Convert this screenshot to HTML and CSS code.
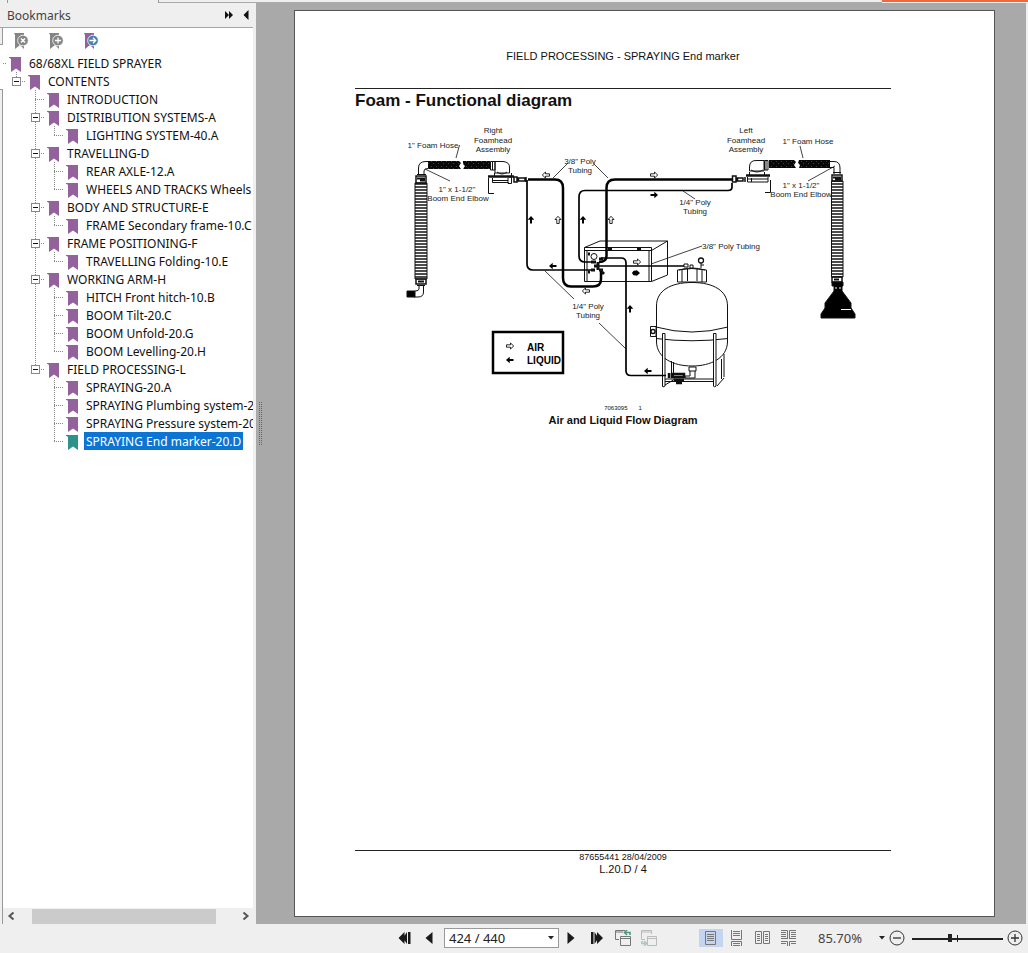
FILE: index.html
```html
<!DOCTYPE html>
<html lang="en">
<head>
<meta charset="utf-8">
<title>68/68XL Field Sprayer - PDF viewer</title>
<link rel="stylesheet" href="styles.css">
</head>
<body>
<svg class="defs" aria-hidden="true">
  <symbol id="flag" viewBox="0 0 12 15"><path d="M0 0H12V15L7 11.500L2 15V2Q1 1 0 0.800Z" fill="currentColor"/></symbol>
  <symbol id="air" viewBox="-5 -4 10 8"><path d="M-3.500-1.200H.5V-3L3.700 0L.5 3V1.200H-3.500Z" fill="#fff" stroke="#111" stroke-width=".9"/></symbol>
  <symbol id="liq" viewBox="-5 -4 10 8"><path d="M-3.500-1H.3V-3.300L4 0L.3 3.300V1H-3.500Z" fill="#000"/></symbol>
</svg>
<div class="app">
  <div class="tabs"><span class="tab tab-a"></span><span class="tab tab-b"></span><span class="tab tab-c"></span><span class="accent"></span></div>
  <div class="work">
    <aside class="side">
      <header class="side-head">
        <h2>Bookmarks</h2>
        <button class="plain" aria-label="Expand panel"><svg width="10" height="10"><path d="M1 1L5 5L1 9ZM5 1L9 5L5 9Z" fill="#111"/></svg></button>
        <button class="plain" aria-label="Collapse panel"><svg width="6" height="10"><path d="M5.500 0V10L.5 5Z" fill="#111"/></svg></button>
      </header>
      <div class="side-body">
        <div class="rail"><span class="rail-top"></span><span class="rail-open"></span><span class="rail-rest"></span></div>
        <div class="panel">
          <div class="tools">
            <button class="plain" aria-label="Delete bookmark"><svg width="16" height="17"><path d="M0 0H10V16L6 12L1 16V2Z" fill="#858585"/><circle cx="9" cy="7.500" r="5.300" fill="#858585" stroke="#fff" stroke-width=".8"/><path d="M7 5.500L11 9.500M11 5.500L7 9.500" stroke="#fff" stroke-width="1.500"/></svg></button>
            <button class="plain" aria-label="Add bookmark"><svg width="16" height="17"><path d="M0 0H10V16L6 12L1 16V2Z" fill="#858585"/><circle cx="9" cy="7.500" r="5.300" fill="#858585" stroke="#fff" stroke-width=".8"/><path d="M6 7.500H12M9 4.500V10.500" stroke="#fff" stroke-width="1.300"/></svg></button>
            <button class="plain" aria-label="Go to bookmark"><svg width="16" height="17"><path d="M0 0H10V16L6 12L1 16V2Z" fill="#93619b"/><circle cx="9" cy="7.500" r="5.300" fill="#4580ac" stroke="#fff" stroke-width=".8"/><path d="M5.500 7.500H11.500M9 4.800L11.700 7.500L9 10.200" fill="none" stroke="#fff" stroke-width="1.300"/></svg></button>
          </div>
          <ul class="tree root">
            <li><span class="branch"></span><div><a href="#" class="row"><svg class="flag"><use href="#flag"/></svg><span>68/68XL FIELD SPRAYER</span></a>
              <ul class="tree">
                <li><span class="branch"><button class="toggle" aria-label="Collapse"></button></span><div><a href="#" class="row"><svg class="flag"><use href="#flag"/></svg><span>CONTENTS</span></a>
                  <ul class="tree">
                    <li><span class="branch"></span><div><a href="#" class="row"><svg class="flag"><use href="#flag"/></svg><span>INTRODUCTION</span></a></div></li>
                    <li><span class="branch"><button class="toggle" aria-label="Collapse"></button></span><div><a href="#" class="row"><svg class="flag"><use href="#flag"/></svg><span>DISTRIBUTION SYSTEMS-A</span></a>
                      <ul class="tree">
                        <li><span class="branch"></span><div><a href="#" class="row"><svg class="flag"><use href="#flag"/></svg><span>LIGHTING SYSTEM-40.A</span></a></div></li>
                      </ul></div></li>
                    <li><span class="branch"><button class="toggle" aria-label="Collapse"></button></span><div><a href="#" class="row"><svg class="flag"><use href="#flag"/></svg><span>TRAVELLING-D</span></a>
                      <ul class="tree">
                        <li><span class="branch"></span><div><a href="#" class="row"><svg class="flag"><use href="#flag"/></svg><span>REAR AXLE-12.A</span></a></div></li>
                        <li><span class="branch"></span><div><a href="#" class="row"><svg class="flag"><use href="#flag"/></svg><span>WHEELS AND TRACKS Wheels</span></a></div></li>
                      </ul></div></li>
                    <li><span class="branch"><button class="toggle" aria-label="Collapse"></button></span><div><a href="#" class="row"><svg class="flag"><use href="#flag"/></svg><span>BODY AND STRUCTURE-E</span></a>
                      <ul class="tree">
                        <li><span class="branch"></span><div><a href="#" class="row"><svg class="flag"><use href="#flag"/></svg><span>FRAME Secondary frame-10.C</span></a></div></li>
                      </ul></div></li>
                    <li><span class="branch"><button class="toggle" aria-label="Collapse"></button></span><div><a href="#" class="row"><svg class="flag"><use href="#flag"/></svg><span>FRAME POSITIONING-F</span></a>
                      <ul class="tree">
                        <li><span class="branch"></span><div><a href="#" class="row"><svg class="flag"><use href="#flag"/></svg><span>TRAVELLING Folding-10.E</span></a></div></li>
                      </ul></div></li>
                    <li><span class="branch"><button class="toggle" aria-label="Collapse"></button></span><div><a href="#" class="row"><svg class="flag"><use href="#flag"/></svg><span>WORKING ARM-H</span></a>
                      <ul class="tree">
                        <li><span class="branch"></span><div><a href="#" class="row"><svg class="flag"><use href="#flag"/></svg><span>HITCH Front hitch-10.B</span></a></div></li>
                        <li><span class="branch"></span><div><a href="#" class="row"><svg class="flag"><use href="#flag"/></svg><span>BOOM Tilt-20.C</span></a></div></li>
                        <li><span class="branch"></span><div><a href="#" class="row"><svg class="flag"><use href="#flag"/></svg><span>BOOM Unfold-20.G</span></a></div></li>
                        <li><span class="branch"></span><div><a href="#" class="row"><svg class="flag"><use href="#flag"/></svg><span>BOOM Levelling-20.H</span></a></div></li>
                      </ul></div></li>
                    <li><span class="branch"><button class="toggle" aria-label="Collapse"></button></span><div><a href="#" class="row"><svg class="flag"><use href="#flag"/></svg><span>FIELD PROCESSING-L</span></a>
                      <ul class="tree">
                        <li><span class="branch"></span><div><a href="#" class="row"><svg class="flag"><use href="#flag"/></svg><span>SPRAYING-20.A</span></a></div></li>
                        <li><span class="branch"></span><div><a href="#" class="row"><svg class="flag"><use href="#flag"/></svg><span>SPRAYING Plumbing system-20</span></a></div></li>
                        <li><span class="branch"></span><div><a href="#" class="row"><svg class="flag"><use href="#flag"/></svg><span>SPRAYING Pressure system-20</span></a></div></li>
                        <li><span class="branch"></span><div><a href="#" class="row current"><svg class="flag"><use href="#flag"/></svg><span>SPRAYING End marker-20.D</span></a></div></li>
                      </ul></div></li>
                  </ul></div></li>
              </ul></div></li>
          </ul>
          <div class="hscroll">
            <button class="plain" aria-label="Scroll left"><svg width="8" height="8"><path d="M6.500 .5L2.500 4L6.500 7.500" fill="none" stroke="#555" stroke-width="2"/></svg></button>
            <span class="bar"></span>
            <button class="plain" aria-label="Scroll right"><svg width="8" height="8"><path d="M1.500 .5L5.500 4L1.500 7.500" fill="none" stroke="#555" stroke-width="2"/></svg></button>
          </div>
        </div>
      </div>
    </aside>
    <main class="viewer">
      <span class="grip"></span>
      <article class="page">
        <p class="running">FIELD PROCESSING - SPRAYING End marker</p>
        <h1>Foam - Functional diagram</h1>
        <figure>
          <svg class="diagram" viewBox="355 120 536 282" role="img" aria-label="Air and liquid flow diagram">
            <defs>
              <pattern id="ribs" width="12" height="3" patternUnits="userSpaceOnUse"><path d="M0 1H12" stroke="#111" stroke-width="1.500"/></pattern>
              <pattern id="braid" width="5" height="5" patternUnits="userSpaceOnUse"><path d="M0 0H5V5H0Z" fill="#080808"/><path d="M1 1L2 2M3 4L4 3" stroke="#777" stroke-width=".5"/></pattern>
            </defs>
            <g fill="none" stroke="#111" stroke-width="1">
              <!-- right foamhead -->
              <path d="M418.500 175V168Q418.500 161.500 426 161.500H428M424 175V171Q424 168.500 428 168.500M417 174.500H426"/>
              <path d="M428 161H459L461 163L459 166L461 169H428ZM463 161H490V169H463L465 166L463 164Z" fill="url(#braid)" stroke="none"/>
              <path d="M490.500 161.500H495V170H490.500ZM492.500 161V170M495 161.500H503Q510 162 509.500 168V173H495ZM497 172Q502 176 507 172M494.500 173V176M511.500 173V176"/>
              <path d="M488 176.500H514" stroke-width="2.500"/>
              <path d="M492.500 178V182.500H508.500M508.500 177H511.500V183.500H508V178M488.500 178V193.500H494M492 180.500H508"/>
              <path d="M514 177V182H517V177ZM518.500 178H525V181H518.500ZM526 177V182" stroke-width="1.500"/>
              <path d="M415 183H427V279H415Z" fill="url(#ribs)"/>
              <path d="M416 176H426V183H416ZM416 279H426V284H416Z" stroke-width="1.500"/><path d="M417 178.500H425M420 180.500H425M418 281.500H424" stroke-width="2"/>
              <path d="M417 285.500H425M419 286V289Q419 291 415 291M423.500 286V292Q423.500 297 418 297H414"/>
              <path d="M407 291H415V297H407Z" fill="#000"/>
              <!-- left foamhead -->
              <path d="M749.500 171V167Q749.500 160 757 160.500H764V171H749.500ZM751 170Q757 174 763 170M764.500 160.500H768V170H764.500ZM766 160V170M749.500 172V175M764.500 172V175"/>
              <path d="M746 175.500H770" stroke-width="2.500"/>
              <path d="M747.500 177V182H768V177M751.500 178V182M747 179H768M770.500 180V192.500H765"/>
              <path d="M732.500 176V182H736V176ZM737.500 178H743V181H737.500ZM745 177V182" stroke-width="1.500"/>
              <path d="M769 160H794L796 162L794 165L796 168H769ZM799 160H830V168H799L800 165L798 163Z" fill="url(#braid)" stroke="none"/>
              <path d="M830 161.500H834Q840 161.500 840 168V174M830 167.500H834V174M833 172.500H841"/>
              <path d="M831.500 181H843V277H831.500Z" fill="url(#ribs)"/>
              <path d="M832 175H842V181H832ZM832 277H842V282H832Z" stroke-width="1.500"/><path d="M833 177.500H841M835 179.500H841M834 279.500H839" stroke-width="2"/>
              <path d="M832 282H843V286H842V291L851 303V308L855 314V318H821V314L825 308V303L834 291V286H832Z" fill="#000"/>
              <path d="M835 288H837M839 288H841M841 309.500H851" stroke="#fff" stroke-width="1.200"/>
              <!-- control box -->
              <path d="M584.500 281.500V247.500L600 241H667.500V275L651.500 281.500ZM584.500 247.500H651.500V281.500M584.500 250.500H651.500L667.500 241M587 251V281M649 251V281"/>
              <path d="M608 249H612M637 249H641" stroke-width="3"/>
              <!-- tank -->
              <path d="M656.500 342V306C656.500 291 670 282.500 692 282.500S727.500 291 727.500 306V342C727 358 711 366 692 366S657 358 656.500 342ZM656 327Q692 337 728 327M656 338.500Q692 343 728 338.500"/>
              <path d="M677.500 282V270Q692 267 706.500 270V282ZM682 270V282M687.500 269V281M697 269V281M702 270V282" />
              <path d="M679 270Q692 266 705 270M690 269V265H693V269M684 264H688V267H684ZM701 268V263M701 265H704"/><circle cx="701" cy="260.500" r="2.500" stroke-width="1.300"/>
              <path d="M650.500 326.500H656V336.500H650.500Z"/><circle cx="653" cy="331.500" r="2" stroke-width="1.400"/>
              <path d="M671.500 361V376M673.500 362V376M721.500 359V379M724 354V377M665 379H713M665 381.500H713M665 385L675 379M717 386L724 378"/>
              <path d="M662.500 333.500H665V386L663 387L662.500 386ZM713.500 333.500H716V386L714.500 387L713.500 386Z" fill="#fff"/>
              <path d="M689 367H696V371H689ZM690 371V376H685V378H695V371"/>
              <path d="M669 373V378M672 374H684V377H672ZM674 380H684M676 383H682" stroke-width="2.500"/>
              <!-- tubing -->
              <g stroke="#000" stroke-width="2.500"><path d="M528 179.500H555Q563 179.500 563 188V278Q563 286.500 571 286.500H593Q601 286.500 601 279V270M732 179.500H615Q606.500 179.500 606.500 188V256Q606.500 262 599 262"/></g>
              <g stroke="#000" stroke-width="1.700"><path d="M527 180V264Q527 270 533 270H592M732 183V187Q732 190.500 728 190.500H585Q579 190.500 579 197V256Q579 262 585 262H592M601 258H621Q626 258 626 263V371Q626 375.500 631 375.500H666M597 266H684"/></g>
              <circle cx="594" cy="256.500" r="3"/>
              <path d="M588 254H590M588 272H590M591 262H596M591 270H595M599 259H603M599 270H603M604 274L602 272" stroke-width="3"/><path d="M594 266H599M598 262V270" stroke-width="3"/>
              <!-- leaders -->
              <path d="M459.500 145L456 158M425 169L450 181M568 163L553 178M594 164L608 178M683 191L695 199M651 264L702 246M545 271L574 299M599 323L626 349M800 146L803 158M808 181L835 166" stroke-width=".8"/>
              <path d="M493 332H563V373H493Z" stroke="#000" stroke-width="2.500"/>
            </g>
            <use href="#air" x="-5" y="-4" width="10" height="8" transform="translate(546 175) rotate(180)"/>
            <use href="#air" x="-5" y="-4" width="10" height="8" transform="translate(558 220) rotate(-90)"/>
            <use href="#air" x="-5" y="-4" width="10" height="8" transform="translate(611 220) rotate(-90)"/>
            <use href="#air" x="-5" y="-4" width="10" height="8" transform="translate(654 175)"/>
            <use href="#air" x="-5" y="-4" width="10" height="8" transform="translate(637 262)"/>
            <use href="#air" x="-5" y="-4" width="10" height="8" transform="translate(586 291) rotate(180)"/>
            <use href="#air" x="-5" y="-4" width="10" height="8" transform="translate(510 346)"/>
            <use href="#liq" x="-5" y="-4" width="10" height="8" transform="translate(531 220) rotate(-90)"/>
            <use href="#liq" x="-5" y="-4" width="10" height="8" transform="translate(583 220) rotate(-90)"/>
            <use href="#liq" x="-5" y="-4" width="10" height="8" transform="translate(630 309) rotate(-90)"/>
            <use href="#liq" x="-5" y="-4" width="10" height="8" transform="translate(654 195)"/>
            <use href="#liq" x="-5" y="-4" width="10" height="8" transform="translate(553 266) rotate(180)"/>
            <use href="#liq" x="-5" y="-4" width="10" height="8" transform="translate(648 371) rotate(180)"/>
            <use href="#liq" x="-5" y="-4" width="10" height="8" transform="translate(510 360) rotate(180)"/>
            <use href="#liq" x="-5" y="-4" width="10" height="8" transform="translate(636 273)"/><circle cx="635" cy="273" r="2.500"/>
            <g class="callout">
              <text x="433" y="148">1" Foam Hose</text>
              <text x="493" y="133">Right</text><text x="493" y="143">Foamhead</text><text x="493" y="152">Assembly</text>
              <text x="457" y="192">1" x 1-1/2"</text><text x="458" y="201">Boom End Elbow</text>
              <text x="580" y="164">3/8" Poly</text><text x="580" y="173">Tubing</text>
              <text x="746" y="133">Left</text><text x="746" y="143">Foamhead</text><text x="746" y="152">Assembly</text>
              <text x="808" y="144">1" Foam Hose</text>
              <text x="801" y="188">1" x 1-1/2"</text><text x="801" y="197">Boom End Elbow</text>
              <text x="695" y="205">1/4" Poly</text><text x="695" y="214">Tubing</text>
              <text x="731" y="249">3/8" Poly Tubing</text>
              <text x="588" y="309">1/4" Poly</text><text x="588" y="318">Tubing</text>
            </g>
            <g class="key"><text x="527" y="351">AIR</text><text x="527" y="364">LIQUID</text></g>
          </svg>
          <div class="fignum"><span>7063095</span><span>1</span></div>
          <figcaption>Air and Liquid Flow Diagram</figcaption>
        </figure>
        <footer class="page-foot"><small>87655441 28/04/2009</small><span>L.20.D / 4</span></footer>
      </article>
    </main>
    <div class="edge"></div>
  </div>
  <footer class="status">
    <div class="group">
      <button class="btn" aria-label="First page"><svg width="14" height="12"><path d="M6.500 0V12L.5 6ZM12.500 0V12H10V0ZM9 0V12L5 6Z" fill="#1a1a1a"/></svg></button>
      <button class="btn" aria-label="Previous page"><svg width="8" height="12"><path d="M7.500 0V12L.5 6Z" fill="#1a1a1a"/></svg></button>
    </div>
    <div class="group field">
      <span class="combo"><select aria-label="Page"><option>424 / 440</option></select><svg width="6" height="4"><path d="M0 0H6L3 3.500Z" fill="#222"/></svg></span>
      <button class="btn" aria-label="Next page"><svg width="8" height="12"><path d="M.5 0V12L7.500 6Z" fill="#1a1a1a"/></svg></button>
    </div>
    <div class="group spaced">
      <button class="btn" aria-label="Last page"><svg width="14" height="12"><path d="M1 0H3.500V12H1ZM4.500 0L8.500 6L4.500 12ZM7 0L13 6L7 12Z" fill="#1a1a1a"/></svg></button>
      <button class="btn" aria-label="Previous view"><svg width="16" height="16" fill="none" stroke="#777"><path d="M4 9.500H.5V.5H10M.5 2H8"/><path d="M5.500 6.500H15.500V15.500H5.500ZM5.500 8.500H15"/><path d="M15 5V2.500H10M12 0L9.500 2.500L12 5" stroke="#4b9a7c" stroke-width="1.600"/></svg></button>
      <button class="btn" aria-label="Next view"><svg width="16" height="16" fill="none" stroke="#bbb"><path d="M4 9.500H.5V.5H10.500V4M.5 2H10"/><path d="M6.500 6.500H15.500V15.500H6.500ZM6.500 8.500H15"/><path d="M1 11V13.500H5M3 11L5.500 13.500L3 16" stroke="#a9c8bb" stroke-width="1.600"/></svg></button>
    </div>
    <div class="group spaced views">
      <button class="btn on" aria-label="Single page"><svg width="12" height="14" fill="none" stroke="#777"><path d="M.5 .5H10.500V13.500H.5ZM2 3.500H9M2 5.500H9M2 7.500H9M2 9.500H9"/></svg></button>
      <button class="btn" aria-label="Continuous"><svg width="12" height="16" fill="none" stroke="#777"><path d="M.5 0V9.500H10.500V0M2 1.500H9M2 3.500H9M2 5.500H9M.5 16V11.500H10.500V16M2 13.500H9M2 15.500H9"/></svg></button>
      <button class="btn" aria-label="Facing"><svg width="16" height="14" fill="none" stroke="#777"><path d="M.5 .5H6.500V12.500H.5ZM8.500 .5H14.500V12.500H8.500ZM2 3.500H5M2 5.500H5M2 7.500H5M2 9.500H5M10 3.500H13M10 5.500H13M10 7.500H13M10 9.500H13"/></svg></button>
      <button class="btn" aria-label="Continuous facing"><svg width="16" height="16" fill="none" stroke="#777"><path d="M0 .5H6.500V9M15 .5H8.500V9M0 2.500H5M0 4.500H5M0 6.500H5M10 2.500H15M10 4.500H15M10 6.500H15M0 8.500H6.500M8.500 8.500H15M0 11.500H6.500V16M15 11.500H8.500V16M0 13.500H5M10 13.500H15"/></svg></button>
    </div>
    <div class="zoom">
      <span class="combo bare"><select aria-label="Zoom level"><option>85.70%</option></select><svg width="6" height="4"><path d="M0 0H6L3 3.500Z" fill="#222"/></svg></span>
      <button class="plain" aria-label="Zoom out"><svg width="16" height="16" fill="none" stroke="#333"><circle cx="8" cy="8" r="7"/><path d="M4 8H12" stroke-width="1.300"/></svg></button>
      <input type="range" min="0" max="100" value="41" aria-label="Zoom">
      <button class="plain" aria-label="Zoom in"><svg width="16" height="16" fill="none" stroke="#333"><circle cx="8" cy="8" r="7"/><path d="M4 8H12M8 4V12" stroke-width="1.300"/></svg></button>
    </div>
  </footer>
</div>
</body>
</html>
```
FILE: styles.css
```css
* { box-sizing: border-box; }
body { margin: 0; background: #efefef; font-family: "Noto Sans", Tahoma, sans-serif; font-size: 12px; color: #111; }
button { font: inherit; border: 0; background: none; padding: 0; }
svg { display: block; flex: none; }
ul { list-style: none; margin: 0; padding: 0; }
h1, h2, p, figure { margin: 0; }
.defs { position: absolute; width: 0; height: 0; }
.plain { display: flex; }

.app { display: flex; flex-direction: column; min-height: 100vh; }
.tabs { display: flex; height: 3px; }
.tab { border-right: 1px solid #999; }
.tab-a { width: 8px; }
.tab-b { width: 151px; }
.tab-c { flex: 1; border-right: 0; border-bottom: 1px solid #aaa; }
.accent { width: 146px; height: 2px; background: #f26637; }

.work { flex: 1; display: flex; }
.side { width: 256px; flex: none; display: flex; flex-direction: column; padding-right: 3px; }
.side-head { display: flex; align-items: center; height: 25px; padding: 0 4px 0 7px; gap: 9px; border-bottom: 1px solid #a5a5a5; }
.side-head h2 { flex: 1; font-size: 12px; font-weight: 400; color: #444; }
.side-body { flex: 1; display: flex; }
.rail { width: 3px; flex: none; display: flex; flex-direction: column; }
.rail-top { height: 17px; border-right: 1px solid #999; border-bottom: 1px solid #999; }
.rail-open { height: 45px; background: #fff; border-bottom: 1px solid #999; }
.rail-rest { flex: 1; border-right: 1px solid #999; }
.panel { flex: 1; min-width: 0; display: flex; flex-direction: column; background: #fff; }
.tools { display: flex; gap: 19px; padding: 5px 11px 4px; }

.tree { white-space: nowrap; }
.root { flex: 1; overflow: hidden; }
.tree li { display: grid; grid-template-columns: 19px minmax(0, 1fr); }
.root > li { grid-template-columns: 4px minmax(0, 1fr); }
.branch {
  display: block; padding: 5px 0 0 5px;
  background:
    repeating-linear-gradient(90deg, #888 0 1px, #fff 1px 2px) 9px 9px / 12px 1px no-repeat,
    repeating-linear-gradient(#888 0 1px, #fff 1px 2px) 9px 0 / 1px 100% no-repeat;
}
.tree li:last-child > .branch {
  background:
    repeating-linear-gradient(90deg, #888 0 1px, #fff 1px 2px) 9px 9px / 12px 1px no-repeat,
    repeating-linear-gradient(#888 0 1px, #fff 1px 2px) 9px 0 / 1px 10px no-repeat;
}
.root > li:last-child > .branch { background: repeating-linear-gradient(90deg, #888 0 1px, #fff 1px 2px) 0 9px / 4px 1px no-repeat; padding: 0; }
.toggle { display: block; width: 9px; height: 9px; border: 1px solid #888; background: linear-gradient(#111, #111) center / 5px 1px no-repeat #fff; }
.row { display: flex; height: 18px; padding-left: 2px; gap: 6px; color: #111; text-decoration: none; line-height: 16px; }
.row span { padding: 2px 2px 0; }
.flag { width: 12px; height: 15px; margin-top: 3px; color: #93619b; }
.current .flag { color: #2b9389; }
.current span { background: #0c75d3; color: #fff; }

.hscroll { display: flex; align-items: center; height: 16px; padding: 0 3px 0 4px; background: #efefef; }
.bar { flex: 1; height: 15px; margin: 0 26px 0 17px; background: #cbcbcb; }

.viewer { flex: 1; min-width: 0; display: flex; background: #a9a9a9; padding: 7px 31px 7px 3px; }
.grip { width: 3px; height: 44px; margin: 392px 32px 0 0; flex: none; background: repeating-linear-gradient(#666 0 1px, transparent 1px 2px) 0 0 / 1px 100% no-repeat, repeating-linear-gradient(#666 0 1px, transparent 1px 2px) 2px 0 / 1px 100% no-repeat; }
.edge { width: 2px; background: #efefef; }
.page { flex: 1; min-width: 0; display: flex; flex-direction: column; background: #fff; border: 1px solid #555; padding: 37px 103px 41px 60px; font-family: "Liberation Sans", Arial, sans-serif; }
.running { text-align: center; font-size: 11px; line-height: 16px; padding-bottom: 24px; border-bottom: 1px solid #222; }
.page h1 { font-size: 17px; line-height: 24px; }
.page figure { flex: 1; padding-top: 7px; text-align: center; }
.diagram { width: 100%; }
.callout { font-size: 8px; text-anchor: middle; fill: #222; }
.key { font-size: 10px; font-weight: 700; }
.fignum { display: flex; justify-content: center; gap: 11px; font-size: 6px; line-height: 12px; }
.page figcaption { font-size: 11px; font-weight: 700; line-height: 12px; }
.page-foot { display: flex; flex-direction: column; align-items: center; border-top: 1px solid #222; font-size: 11px; line-height: 12px; }
.page-foot small { font-size: 9px; }

.status { display: flex; justify-content: flex-end; align-items: center; height: 29px; padding: 0 5px 2px 0; }
.group { display: flex; align-items: center; }
.btn { display: flex; align-items: center; justify-content: center; width: 24px; height: 18px; }
.on { background: #c5d5f0; }
.field { margin-left: 3px; }
.spaced { gap: 2px; margin-left: 2px; }
.views { margin-left: 38px; }
.combo { display: grid; align-items: center; width: 115px; height: 20px; background: #fff; border: 1px solid #999; }
.combo > * { grid-area: 1 / 1; }
.combo svg { justify-self: end; margin-right: 4px; pointer-events: none; }
.combo select { appearance: none; width: 100%; height: 18px; border: 0; padding: 0 4px; background: none; font: 13px/18px "Noto Sans", sans-serif; color: #222; }
.zoom { display: flex; align-items: center; margin-left: 17px; }
.combo.bare { width: 71px; background: none; border: 0; }
.bare select { padding: 0; color: #444; }
.zoom input {
  appearance: none; width: 91px; height: 16px; margin: 0 4px 0 7px;
  background: linear-gradient(#222, #222) 0 8px / 100% 2px no-repeat, linear-gradient(#222, #222) 45px 5px / 1px 7px no-repeat;
}
.zoom input::-webkit-slider-thumb { appearance: none; width: 4px; height: 8px; background: #222; }
```
